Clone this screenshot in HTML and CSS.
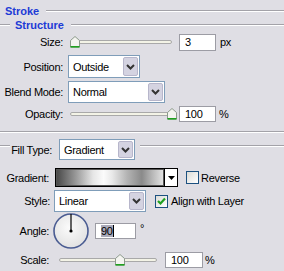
FILE: index.html
```html
<!DOCTYPE html>
<html lang="en">
  <head>
    <meta charset="UTF-8" />
    <title>Stroke</title>
    <link rel="stylesheet" href="styles.css">
  </head>
  <body>
    <div class="panel">
      <div class="legend top"><span class="title">Stroke</span><span class="rule"></span></div>
      <div class="legend sub"><span class="stub"></span><span class="title">Structure</span><span class="rule"></span></div>

      <div class="row g1 size-row">
        <span class="lbl">Size:</span>
        <div class="slider">
          <div class="track"></div>
          <svg class="thumb" style="left: 2px" width="10" height="12" viewBox="0 0 10 12"><path d="M5 .5 L9.5 4.5 V11 H.5 V4.5 Z" fill="#f4f4f0" stroke="#8c9a8c"/><path d="M.5 10.8 H9.5" stroke="#1fa01f" stroke-width="1.6"/></svg>
        </div>
        <div class="num">3</div><span class="unit">px</span>
      </div>

      <div class="row g1 pos-row">
        <span class="lbl">Position:</span>
        <div class="select w-pos"><span class="val">Outside</span><span class="btn"><svg width="9" height="6" viewBox="0 0 9 6"><path d="M1 1 L4.5 4.5 L8 1" fill="none" stroke="#333" stroke-width="2"/></svg></span></div>
      </div>

      <div class="row g1 blend-row">
        <span class="lbl">Blend Mode:</span>
        <div class="select w-blend"><span class="val">Normal</span><span class="btn"><svg width="9" height="6" viewBox="0 0 9 6"><path d="M1 1 L4.5 4.5 L8 1" fill="none" stroke="#333" stroke-width="2"/></svg></span></div>
      </div>

      <div class="row g1 opac-row">
        <span class="lbl">Opacity:</span>
        <div class="slider">
          <div class="track"></div>
          <svg class="thumb" style="left: 99px" width="10" height="12" viewBox="0 0 10 12"><path d="M5 .5 L9.5 4.5 V11 H.5 V4.5 Z" fill="#f4f4f0" stroke="#8c9a8c"/><path d="M.5 10.8 H9.5" stroke="#1fa01f" stroke-width="1.6"/></svg>
        </div>
        <div class="num">100</div><span class="unit pct">%</span>
      </div>

      <div class="sep"></div>

      <div class="row fill-row">
        <span class="stub"></span>
        <span class="lbl">Fill Type:</span>
        <div class="select w-fill"><span class="val">Gradient</span><span class="btn"><svg width="9" height="6" viewBox="0 0 9 6"><path d="M1 1 L4.5 4.5 L8 1" fill="none" stroke="#333" stroke-width="2"/></svg></span></div>
        <span class="rule"></span>
      </div>

      <div class="row g2 grad-row">
        <span class="lbl">Gradient:</span>
        <div class="swatch">
          <div class="grad"></div>
          <div class="drop"><svg width="7" height="4" viewBox="0 0 7 4"><path d="M0 0 H7 L3.5 4 Z" fill="#000"/></svg></div>
        </div>
        <span class="chk rev"></span><span class="chk-text">Reverse</span>
      </div>

      <div class="row g2 style-row">
        <span class="lbl">Style:</span>
        <div class="select w-style"><span class="val">Linear</span><span class="btn"><svg width="9" height="6" viewBox="0 0 9 6"><path d="M1 1 L4.5 4.5 L8 1" fill="none" stroke="#333" stroke-width="2"/></svg></span></div>
        <span class="chk align"><svg width="11" height="11" viewBox="0 0 11 11"><path d="M2 5 L4.5 7.5 L9 2.5" fill="none" stroke="#21a121" stroke-width="2.2"/></svg></span><span class="chk-text">Align with Layer</span>
      </div>

      <div class="row g2 angle-row">
        <span class="lbl">Angle:</span>
        <svg class="dial" width="36" height="36" viewBox="0 0 36 36">
          <defs>
            <radialGradient id="dialFill" cx="45%" cy="40%" r="60%">
              <stop offset="0" stop-color="#fbfbfb"/>
              <stop offset="1" stop-color="#e2e2e2"/>
            </radialGradient>
          </defs>
          <circle cx="18" cy="18" r="17" fill="url(#dialFill)" stroke="#4a5c92" stroke-width="1.6"/>
          <path d="M18 1 V18" stroke="#000" stroke-width="1.2"/>
          <circle cx="18" cy="18" r="1.6" fill="#000"/>
        </svg>
        <div class="num angle"><span class="hl">90</span><span class="caret"></span></div>
        <span class="deg">°</span>
      </div>

      <div class="row g2 scale-row">
        <span class="lbl">Scale:</span>
        <div class="slider scale">
          <div class="track"></div>
          <svg class="thumb" style="left: 58px" width="10" height="12" viewBox="0 0 10 12"><path d="M5 .5 L9.5 4.5 V11 H.5 V4.5 Z" fill="#f4f4f0" stroke="#8c9a8c"/><path d="M.5 10.8 H9.5" stroke="#1fa01f" stroke-width="1.6"/></svg>
        </div>
        <div class="num">100</div><span class="unit">%</span>
      </div>
    </div>
  </body>
</html>
```

FILE: styles.css
```css
body {
  margin: 0;
  background-color: #dfdee4;
  font-family: "Liberation Sans", Arial, sans-serif;
  font-size: 11px;
  letter-spacing: -0.3px;
  color: #000;
  width: 284px;
  height: 271px;
  overflow: hidden;
  white-space: nowrap;
}

.legend {
  display: flex;
  align-items: center;
  height: 14px;
}
.legend.top {
  padding-top: 4px;
}
.legend.top .title {
  margin-left: 5px;
}

.title {
  color: #1d3bd6;
  font-weight: bold;
  letter-spacing: 0;
}

.rule {
  flex: 1;
  height: 0;
  border-top: 1px solid #a3a2a8;
  border-bottom: 1px solid #fff;
  margin-left: 7px;
}

.stub {
  width: 10px;
  height: 0;
  border-top: 1px solid #a3a2a8;
  border-bottom: 1px solid #fff;
  margin-right: 5px;
}

.sep {
  margin-top: 6px;
  border-top: 1px solid #a3a2a8;
  border-bottom: 1px solid #fff;
}

.row {
  display: flex;
  align-items: center;
}

.lbl {
  flex: none;
  text-align: right;
}
.g1 .lbl {
  width: 63px;
  margin-right: 5px;
}

.size-row {
  height: 20px;
}
.pos-row {
  margin-top: 3px;
  height: 23px;
}
.blend-row {
  margin-top: 3px;
  height: 22px;
}
.opac-row {
  height: 22px;
}

/* sliders */
.slider {
  position: relative;
  width: 104px;
  height: 13px;
  display: flex;
  align-items: center;
}
.slider.scale {
  width: 100px;
}
.track {
  flex: 1;
  margin-left: 2px;
  height: 2px;
  border: 1px solid #a9a9a9;
  border-radius: 2px;
  background-color: #f3f3e6;
}
.thumb {
  position: absolute;
  top: 0;
}

.num {
  box-sizing: border-box;
  width: 37px;
  height: 17px;
  margin-left: 7px;
  padding-left: 5px;
  border: 1px solid #9c9ca4;
  background-color: #fff;
  line-height: 15px;
}
.opac-row .num {
  height: 16px;
  line-height: 14px;
}
.unit {
  margin-left: 4px;
}
.unit.pct {
  margin-left: 3px;
}

/* dropdowns */
.select {
  display: flex;
  box-sizing: border-box;
  border: 1px solid #7f9db9;
  background-color: #fff;
  padding: 1px;
}
.select .val {
  flex: 1;
  display: flex;
  align-items: center;
  padding-left: 3px;
}
.select .btn {
  width: 15px;
  box-sizing: border-box;
  border: 1px solid #b7b6cb;
  border-radius: 2px;
  background-color: #d4d3e1;
  display: flex;
  align-items: center;
  justify-content: center;
}
.w-pos {
  width: 72px;
  height: 23px;
}
.w-blend {
  width: 97px;
  height: 22px;
}
.w-fill {
  width: 76px;
  height: 21px;
}
.w-style {
  width: 92px;
  height: 22px;
}

/* fill type group */
.fill-row {
  margin-top: 6px;
  height: 21px;
}
.fill-row .stub,
.fill-row .rule {
  align-self: flex-start;
  margin-top: 6px;
}
.fill-row .stub {
  margin-right: 0;
}
.fill-row .lbl {
  width: 42px;
  margin-right: 7px;
}
.fill-row .rule {
  margin-left: 5px;
}

.grad-row {
  margin-top: 8px;
  height: 19px;
}
.grad-row .lbl {
  width: 49px;
  margin-right: 6px;
}
.swatch {
  display: flex;
  box-sizing: border-box;
  width: 123px;
  height: 19px;
  border: 1px solid #000;
}
.grad {
  flex: 1;
  border: 1px solid #555;
  background: linear-gradient(to right, #4a4a4a 0%, #9a9a9a 18%, #e6e6e6 34%, #fbfbfb 44%, #e9e9e9 52%, #b4b4b4 66%, #8a8a8a 80%, #b8b8b8 90%, #e2e2e2 100%);
}
.drop {
  width: 12px;
  border-left: 1px solid #000;
  background-color: #fff;
  display: flex;
  align-items: center;
  justify-content: center;
}

.chk {
  box-sizing: border-box;
  width: 13px;
  height: 13px;
  border: 1px solid #1c5180;
  background: linear-gradient(135deg, #dcdcd7, #fff);
  display: flex;
  align-items: center;
  justify-content: center;
}
.chk.rev {
  margin-left: 8px;
}
.chk.align {
  margin-left: 9px;
}
.chk-text {
  margin-left: 2px;
}
.style-row .chk-text {
  margin-left: 3px;
}

.style-row {
  margin-top: 3px;
  height: 22px;
}
.style-row .lbl {
  width: 50px;
  margin-right: 4px;
}

.angle-row {
  margin-top: 1px;
  height: 36px;
}
.angle-row .lbl {
  width: 49px;
  margin-right: 4px;
}
.num.angle {
  width: 41px;
  height: 16px;
  margin-left: 6px;
  display: flex;
  align-items: center;
  line-height: 12px;
}
.hl {
  background-color: #a9a9b9;
}
.caret {
  width: 1px;
  height: 12px;
  background-color: #000;
}
.deg {
  align-self: flex-start;
  margin-top: 9px;
  margin-left: 4px;
}

.scale-row {
  height: 22px;
}
.scale-row .lbl {
  width: 49px;
  margin-right: 8px;
}
.scale-row .num {
  width: 38px;
  height: 16px;
  line-height: 14px;
  margin-left: 8px;
}
.scale-row .unit {
  margin-left: 2px;
}
```
